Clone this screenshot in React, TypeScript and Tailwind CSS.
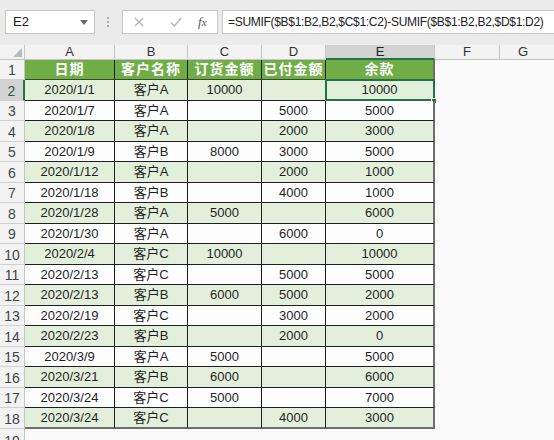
import React from "react";

type Row = [string, string, string, string, string];

const rows: Row[] = [
  ["日期", "客户名称", "订货金额", "已付金额", "余款"],
  ["2020/1/1", "客户A", "10000", "", "10000"],
  ["2020/1/7", "客户A", "", "5000", "5000"],
  ["2020/1/8", "客户A", "", "2000", "3000"],
  ["2020/1/9", "客户B", "8000", "3000", "5000"],
  ["2020/1/12", "客户A", "", "2000", "1000"],
  ["2020/1/18", "客户B", "", "4000", "1000"],
  ["2020/1/28", "客户A", "5000", "", "6000"],
  ["2020/1/30", "客户A", "", "6000", "0"],
  ["2020/2/4", "客户C", "10000", "", "10000"],
  ["2020/2/13", "客户C", "", "5000", "5000"],
  ["2020/2/13", "客户B", "6000", "5000", "2000"],
  ["2020/2/19", "客户C", "", "3000", "2000"],
  ["2020/2/23", "客户B", "", "2000", "0"],
  ["2020/3/9", "客户A", "5000", "", "5000"],
  ["2020/3/21", "客户B", "6000", "", "6000"],
  ["2020/3/24", "客户C", "5000", "", "7000"],
  ["2020/3/24", "客户C", "", "4000", "3000"],
];

const colW = ["w-[90px]", "w-[73px]", "w-[74px]", "w-[64px]", "w-[109px]"];
const letters = ["A", "B", "C", "D", "E"];
const rowH = ["h-[20px]", "h-[21px]"];

const font = {
  fontFamily: '"Liberation Sans", "Noto Sans CJK SC", sans-serif',
};

function FormulaBar() {
  return (
    <div className="flex h-[45px] items-center bg-[#ebebeb] pb-[1px]">
      {/* name box */}
      <div className="ml-[5px] flex h-[24px] w-[90px] items-center justify-between border border-[#c8c8c8] bg-white pl-[7px] pr-[6px] text-[13px] text-[#222]">
        <span>E2</span>
        <svg width="8" height="5" viewBox="0 0 8 5">
          <path d="M0 0h8L4 5z" fill="#6a6a6a" />
        </svg>
      </div>
      {/* grip dots */}
      <div className="ml-[12px] flex flex-col gap-[2px]">
        <span className="h-[2px] w-[2px] bg-[#a8a8a8]" />
        <span className="h-[2px] w-[2px] bg-[#a8a8a8]" />
        <span className="h-[2px] w-[2px] bg-[#a8a8a8]" />
      </div>
      {/* cancel / enter / fx */}
      <div className="ml-[13px] flex h-[24px] w-[96px] items-center border border-[#c8c8c8] bg-white">
        <svg className="ml-[11px]" width="10" height="10" viewBox="0 0 10 10">
          <path d="M1 1l8 8M9 1l-8 8" stroke="#b4b4b4" strokeWidth="1.3" />
        </svg>
        <svg className="ml-[26px]" width="12" height="10" viewBox="0 0 12 10">
          <path d="M1 5.5l3.5 3.5L11 1" stroke="#b4b4b4" strokeWidth="1.4" fill="none" />
        </svg>
        <span
          className="ml-[16px] text-[13px] italic text-[#555]"
          style={{ fontFamily: '"Liberation Serif", serif' }}
        >
          f<span className="text-[11px]">x</span>
        </span>
      </div>
      {/* formula input */}
      <div className="ml-[4px] flex h-[24px] flex-1 items-center overflow-hidden whitespace-nowrap border border-r-0 border-[#c8c8c8] bg-white pl-[5px] text-[12px] tracking-[-0.3px] text-[#222]">
        =SUMIF($B$1:B2,B2,$C$1:C2)-SUMIF($B$1:B2,B2,$D$1:D2)
      </div>
    </div>
  );
}

function ColumnHeaders() {
  return (
    <div className="flex h-[15px] text-[13px] leading-[14px] text-[#333]">
      <div className="relative w-[25px] shrink-0 border-r border-b border-[#c4c4c4] bg-[#f3f3f3]">
        <svg className="absolute right-[2px] bottom-[2px]" width="9" height="9" viewBox="0 0 9 9">
          <path d="M9 0v9H0z" fill="#b9b9b9" />
        </svg>
      </div>
      {letters.map((l, i) => (
        <div
          key={l}
          className={
            colW[i] +
            " shrink-0 text-center border-r border-[#c4c4c4] " +
            (l === "E"
              ? "bg-[#d3d3d3] border-b-2 border-b-[#217346] text-[#222]"
              : "bg-[#f3f3f3] border-b border-b-[#c4c4c4]")
          }
        >
          {l}
        </div>
      ))}
      <div className="w-[65px] shrink-0 border-r border-b border-[#c4c4c4] bg-[#f3f3f3] text-center">
        F
      </div>
      <div className="flex-1 border-b border-[#c4c4c4] bg-[#f3f3f3] pr-[8px] text-center">
        G
      </div>
    </div>
  );
}

function DataRow({ row, idx }: { row: Row; idx: number }) {
  const n = idx + 1;
  const header = idx === 0;
  const last = idx === rows.length - 1;
  const selRow = n === 2;
  const fill = header ? "bg-[#70ad47]" : idx % 2 === 1 ? "bg-[#e2efda]" : "bg-[#fdfdfd]";
  return (
    <div className={rowH[idx % 2] + " flex text-[13px]"}>
      <div
        className={
          "flex w-[25px] shrink-0 items-center justify-center border-b border-[#d0d0d0] pt-[2px] text-[14px] " +
          (selRow
            ? "bg-[#d3d3d3] border-r-2 border-r-[#217346] text-[#2b5a3a]"
            : "bg-[#f3f3f3] border-r border-r-[#c4c4c4] text-[#444]")
        }
      >
        {n}
      </div>
      {row.map((v, c) => (
        <div
          key={c}
          className={
            colW[c] +
            " relative flex shrink-0 items-center justify-center " +
            fill +
            (header ? " font-bold text-white text-[14px] tracking-[1px]" : " text-[#1f1f1f]") +
            (c === 4 ? " border-r-2 border-r-[#6e6e6e]" : " border-r border-r-[#1e1e1e]") +
            (last ? " border-b-2 border-b-[#6e6e6e]" : header ? " border-b border-b-[#2f4f22]" : " border-b border-b-[#1e1e1e]")
          }
        >
          {v}
          {selRow && c === 4 && (
            <>
              <div className="pointer-events-none absolute -top-[1px] -left-[1px] -right-[2px] -bottom-[1px] border-2 border-[#217346]" />
              <div className="absolute -right-[4px] -bottom-[4px] h-[6px] w-[6px] border border-white bg-[#217346]" />
            </>
          )}
        </div>
      ))}
      <div className="w-[65px] shrink-0 bg-[#fafafa]" />
      <div className="flex-1 bg-[#fafafa]" />
    </div>
  );
}

export default function App() {
  return (
    <div className="h-[440px] w-[554px] overflow-hidden bg-[#fafafa]" style={font}>
      <FormulaBar />
      <ColumnHeaders />
      {rows.map((r, i) => (
        <DataRow key={i} row={r} idx={i} />
      ))}
      <div className="flex h-[20px]">
        <div className="flex w-[25px] items-start justify-center border-r border-[#c4c4c4] bg-[#f3f3f3] pt-[2px] text-[14px] text-[#444]">
          19
        </div>
        <div className="flex-1" />
      </div>
    </div>
  );
}
